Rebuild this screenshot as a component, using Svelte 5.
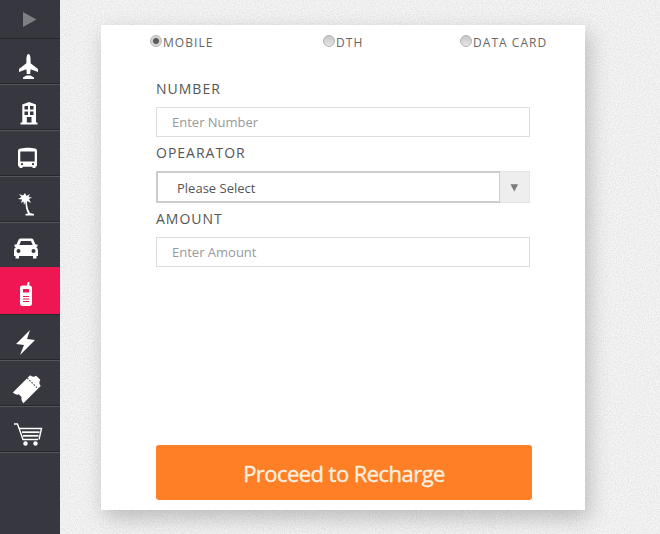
<script>
  const radios = [
    { label: 'MOBILE', checked: true },
    { label: 'DTH', checked: false },
    { label: 'DATA CARD', checked: false }
  ];
</script>

<div class="page">
  <nav class="side">
    <div class="item first">
      <svg viewBox="0 0 60 38"><path d="M23 12 L36.5 19.5 L23 27Z" fill="#7e7f83" /></svg>
    </div>
    <div class="item">
      <svg viewBox="0 0 60 46">
        <path d="M28.5 15C30 15 30.6 18 30.6 21V24.2L38 30V33L30.6 30.2L30.2 35H26.8L26.4 30.2L19 33V30L26.4 24.2V21C26.4 18 27 15 28.5 15Z" />
        <path d="M26.5 36.5H30.5L34 38.5V40H23V38.5Z" />
      </svg>
    </div>
    <div class="item">
      <svg viewBox="0 0 60 46">
        <path fill-rule="evenodd" d="M22.3 19.5L29 17L36 19.5V37.5H37.5V39.5H20.5V37.5H22.3ZM24.5 21V24.5H28V21ZM30 21V24.5H33.5V21ZM24.5 26.5V30H28V26.5ZM30 26.5V30H33.5V26.5ZM26.8 32V37.5H31.5V32Z" />
      </svg>
    </div>
    <div class="item">
      <svg viewBox="0 0 60 46">
        <path fill-rule="evenodd" d="M21 17.5C25 16.5 31 16.5 35 17.5C36.2 17.8 37 18.6 37 20V34C37 35 36.4 35.6 35.5 35.7V37H32.5V35.8H22.5V37H19.5V35.7C18.6 35.6 18 35 18 34V20C18 18.6 18.8 17.8 21 17.5ZM20.3 20.5V30.5H34.7V20.5ZM21 32.3V34H23V32.3ZM32 32.3V34H34V32.3Z" />
      </svg>
    </div>
    <div class="item">
      <svg viewBox="0 0 60 46">
        <path d="M25 16L26.5 19L30 17L28.5 20L32 20.5L29 22L31 26L27.5 24L27 25C27 29 28 33 30 36L34 37V38.5H25.5V37L28 36.5C26 33 25.5 29 25.5 25L24 28L23.5 24.5L21 26L22 22.5L18 22L21.5 20L19 17L23 18.5Z" />
      </svg>
    </div>
    <div class="item">
      <svg viewBox="0 0 60 46">
        <path fill-rule="evenodd" d="M20.5 15.5H31.5C32.5 15.5 33 16 33.5 17L35.5 21.5H37.5V23.5L36 24C37.5 25 38 26 38 28V33H36.5V35.5H33V33H19V35.5H15.5V33H14V28C14 26 14.5 25 16 24L14.5 23.5V21.5H16.5L18.5 17C19 16 19.5 15.5 20.5 15.5ZM21 18L19.3 22H32.7L31 18ZM18.5 26A2 2 0 1 0 18.5 30A2 2 0 1 0 18.5 26ZM33.5 26A2 2 0 1 0 33.5 30A2 2 0 1 0 33.5 26Z" />
      </svg>
    </div>
    <div class="item active">
      <svg viewBox="0 0 60 46">
        <g transform="translate(0 -2)">
          <path fill-rule="evenodd" d="M27 18.5L27.8 15H29.4L29.3 18.5H29.5C31 18.5 32 19.5 32 21V36.5C32 38 31 39 29.5 39H22.5C21 39 20 38 20 36.5V21C20 19.5 21 18.5 22.5 18.5ZM23 22V25.5H29V22ZM23 29V30H29V29ZM23 31.5V32.5H29V31.5ZM23 34V35H29V34Z" />
        </g>
      </svg>
    </div>
    <div class="item">
      <svg viewBox="0 0 60 46">
        <path d="M30 15L16 29L24 30L20 40L35 25L27 24Z" />
      </svg>
    </div>
    <div class="item">
      <svg viewBox="0 0 60 46">
        <g transform="translate(28 27) rotate(-45)">
          <path d="M-14 -7.5H10.5C10.5 -5 12 -3.5 14.5 -3V3C12 3.5 10.5 5 10.5 7.5H-14C-14 5 -12.5 2.5 -11 2V-2C-12.5 -2.5 -14 -5 -14 -7.5Z" />
          <path d="M6.5 -7.5V7.5" stroke="#36373f" stroke-width="1" stroke-dasharray="1.5 1.5" fill="none" />
        </g>
      </svg>
    </div>
    <div class="item">
      <svg viewBox="0 0 60 46">
        <g transform="translate(0 -1)">
          <g fill="none" stroke="#fff" stroke-width="1.4">
            <path d="M14 18H17.5L23 33.5H38" />
            <path d="M19 22.5H41.5L39 33.5" />
            <path d="M22 26.2H39.5" stroke-width="1.8" />
            <path d="M23 29.8H38.5" stroke-width="1.8" />
          </g>
          <circle cx="25.5" cy="37.5" r="2.2" />
          <circle cx="35.5" cy="37.5" r="2.2" />
        </g>
      </svg>
    </div>
  </nav>

  <main class="main">
    <section class="card">
      <div class="radios">
        {#each radios as r}
          <div class="radio-opt">
            <span class="radio" class:on={r.checked}></span>
            <span class="radio-label">{r.label}</span>
          </div>
        {/each}
      </div>

      <form class="form">
        <label class="label" for="num">NUMBER</label>
        <input id="num" class="input" type="text" placeholder="Enter Number" />

        <label class="label" for="op">OPEARATOR</label>
        <div id="op" class="select">
          <span class="select-text">Please Select</span>
          <span class="select-arrow"><svg viewBox="0 0 10 10" width="9" height="9"><path d="M0.5 1.5H9L4.8 9.5Z" fill="#7b7b7b" /></svg></span>
        </div>

        <label class="label" for="amt">AMOUNT</label>
        <input id="amt" class="input" type="text" placeholder="Enter Amount" />

        <button type="button" class="submit">Proceed to Recharge</button>
      </form>
    </section>
  </main>
</div>

<style>
  :global(body) {
    margin: 0;
    background: #f5f5f5;
  }
  .page {
    display: flex;
    width: 660px;
    height: 534px;
    overflow: hidden;
    font-family: "Open Sans", sans-serif;
    color: #555;
    background-color: #f6f6f6;
    background-image: url("data:image/svg+xml,%3Csvg xmlns='http://www.w3.org/2000/svg' width='300' height='300'%3E%3Cfilter id='n'%3E%3CfeTurbulence type='fractalNoise' baseFrequency='.85' numOctaves='2' stitchTiles='stitch'/%3E%3CfeColorMatrix values='0 0 0 0 .45 0 0 0 0 .45 0 0 0 0 .45 0 0 0 .55 -.17'/%3E%3C/filter%3E%3Crect width='300' height='300' filter='url(%23n)'/%3E%3C/svg%3E");
  }
  .side {
    width: 60px;
    height: 534px;
    flex: none;
    background: #36373f;
    display: flex;
    flex-direction: column;
  }
  .item {
    height: 45px;
    flex: none;
    border-bottom: 1px solid #55565c;
    box-shadow: 0 -1px 0 #26272d inset;
  }
  .item.first {
    height: 38px;
    border-bottom-color: #26272d;
    box-shadow: none;
  }
  .item svg {
    display: block;
    width: 60px;
    height: 46px;
    fill: #fff;
  }
  .item.first svg {
    height: 38px;
  }
  .item.active {
    background: #ef1654;
    border-bottom-color: #26272d;
    box-shadow: 0 -2px 0 #ef1654;
  }
  .main {
    flex: 1;
    padding: 25px 0 0 41px;
  }
  .card {
    width: 484px;
    height: 485px;
    background: #fff;
    box-shadow: 4px 8px 20px rgba(0, 0, 0, 0.22);
    padding: 10px 0 10px 55px;
    box-sizing: border-box;
    display: flex;
    flex-direction: column;
  }
  .radios {
    display: grid;
    grid-template-columns: 173px 137px auto;
    margin-left: -6px;
  }
  .radio-opt {
    display: flex;
    align-items: flex-start;
    height: 16px;
  }
  .radio {
    width: 12px;
    height: 12px;
    flex: none;
    box-sizing: border-box;
    border-radius: 50%;
    border: 1px solid #b4b4b4;
    background: linear-gradient(#c6c6c6, #e6e6e6);
    margin-right: 1px;
  }
  .radio.on {
    background: radial-gradient(circle, #5c5c5c 0 2.6px, #cfcfcf 3.4px, #e6e6e6);
  }
  .radio-label {
    font-size: 12px;
    line-height: 16px;
    letter-spacing: 1.05px;
    color: #666;
    margin-top: -1px;
    padding-top: 1px;
  }
  .form {
    display: flex;
    flex-direction: column;
    flex: 1;
    margin-top: 27px;
  }
  .label {
    font-size: 14px;
    line-height: 20px;
    letter-spacing: 1px;
    color: #555;
    height: 29px;
    padding-top: 1px;
    box-sizing: border-box;
    display: block;
  }
  .input {
    display: block;
    width: 374px;
    height: 30px;
    box-sizing: border-box;
    border: 1px solid #ddd;
    background: #fff;
    padding: 0 15px;
    font-family: inherit;
    font-size: 13px;
    color: #555;
    outline: none;
    border-radius: 0;
    margin-bottom: 5px;
  }
  .input::placeholder {
    color: #999;
    opacity: 1;
  }
  .select {
    display: flex;
    width: 374px;
    height: 32px;
    box-sizing: border-box;
    margin-bottom: 5px;
  }
  .select-text {
    flex: 1;
    box-sizing: border-box;
    border: 2px solid #ccc;
    border-right-width: 1px;
    padding-left: 19px;
    font-size: 13px;
    line-height: 30px;
    color: #555;
  }
  .select-arrow {
    width: 30px;
    flex: none;
    background: #eee;
    border: 1px solid #e4e4e4;
    border-left: none;
    box-sizing: border-box;
    display: flex;
    align-items: center;
    justify-content: center;
  }
  .submit {
    margin-top: auto;
    width: 376px;
    height: 55px;
    border: none;
    border-radius: 3px;
    background: #ff7f27;
    color: #fdf1e0;
    font-family: inherit;
    font-size: 22px;
    -webkit-text-stroke: 0.35px #fdf1e0;
    letter-spacing: -0.55px;
    padding: 0;
  }
</style>
